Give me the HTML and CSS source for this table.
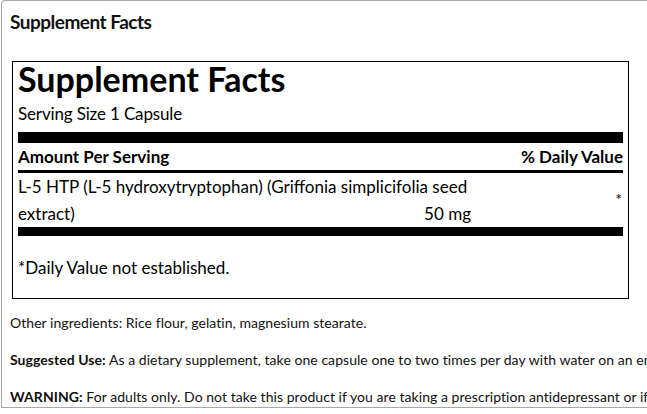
FILE: index.html
```html
<!DOCTYPE html>
<html>
<head>
<meta charset="utf-8">
<link rel="stylesheet" href="styles.css">
</head>
<body>
<div class="panel">
  <h2 class="panel-title">Supplement Facts</h2>
  <div class="label">
    <h1 class="label-title">Supplement Facts</h1>
    <div class="serving">Serving Size 1 Capsule</div>
    <div class="bar bar-thick"></div>
    <div class="row row-head">
      <span>Amount Per Serving</span>
      <span>% Daily Value</span>
    </div>
    <div class="bar bar-thin"></div>
    <div class="row row-item">
      <div class="item-main">
        <span class="item-name">L-5 HTP (L-5 hydroxytryptophan) (Griffonia simplicifolia seed extract)</span>
        <span class="item-amount">50 mg</span>
      </div>
      <span class="item-dv">*</span>
    </div>
    <div class="bar bar-mid"></div>
    <div class="footnote">*Daily Value not established.</div>
  </div>
  <p class="info">Other ingredients: Rice flour, gelatin, magnesium stearate.</p>
  <p class="info"><b>Suggested Use:</b> As a dietary supplement, take one capsule one to two times per day with water on an empty stomach.</p>
  <p class="info"><b>WARNING:</b> For adults only. Do not take this product if you are taking a prescription antidepressant or if you are pregnant or nursing.</p>
</div>
</body>
</html>
```

FILE: styles.css
```css
html, body {
  margin: 0;
  padding: 0;
  background: #fff;
  overflow: hidden;
}
body {
  font-family: Lato, "Open Sans", sans-serif;
  color: #000;
}
.panel {
  margin-left: 1px;
  border: 1px solid #a8a8a8;
  border-right: none;
  border-radius: 4px 0 0 0;
  width: 800px;
  padding: 0 0 0 8px;
  box-sizing: border-box;
}
.panel-title {
  margin: 0;
  padding-top: 10px;
  font-size: 19px;
  font-weight: 700;
  letter-spacing: -0.5px;
  line-height: 22px;
  color: #111;
}
.label {
  margin: 28px 0 0 2px;
  width: 617px;
  box-sizing: border-box;
  border: 1px solid #000;
  padding: 0 5px 18px 5px;
}
.label-title {
  margin: 0;
  font-size: 34px;
  font-weight: 700;
  line-height: 34px;
}
.serving {
  font-size: 17px;
  letter-spacing: -0.15px;
  line-height: 36px;
}
.bar { background: #000; }
.bar-thick { height: 11px; }
.bar-thin { height: 3px; }
.bar-mid { height: 9px; }
.row {
  display: flex;
  font-size: 17px;
}
.row-head {
  justify-content: space-between;
  font-weight: 700;
  line-height: 27px;
}
.row-item {
  line-height: 27px;
}
.item-main {
  display: grid;
  width: 453px;
}
.item-main > span {
  grid-area: 1 / 1;
}
.item-amount {
  align-self: end;
  justify-self: end;
  white-space: nowrap;
}
.item-dv {
  margin-left: auto;
  margin-right: 1px;
  align-self: center;
  font-size: 16px;
  line-height: 16px;
  padding-bottom: 2px;
}
.footnote {
  margin-top: 20px;
  font-size: 17px;
  line-height: 24px;
}
.info {
  margin: 13px 0 0 0;
  font-size: 14px;
  letter-spacing: 0.05px;
  line-height: 21px;
  white-space: nowrap;
  color: #111;
}
.info + .info { margin-top: 16px; }
.info b { font-weight: 700; }
```
